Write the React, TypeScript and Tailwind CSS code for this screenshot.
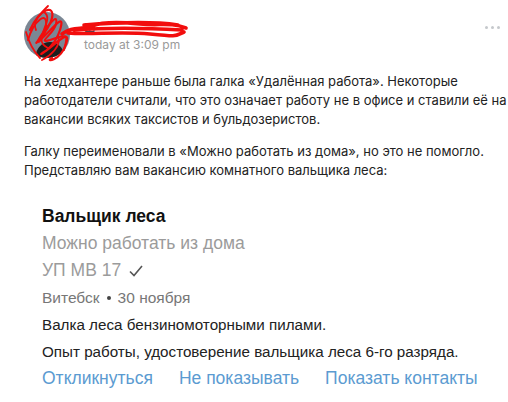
import React from "react";

function Scribble() {
  // red marker scribble over the avatar and the name
  return (
    <svg
      className="absolute left-0 top-0"
      width="200"
      height="64"
      viewBox="0 0 200 64"
      fill="none"
    >
      <path
        d="M30 30 C 40 8, 55 4, 52 18 S 28 50, 40 40 S 66 10, 60 30 S 34 58, 44 52 S 72 26, 66 44 S 44 62, 52 58"
        stroke="#f20d0d"
        strokeWidth="2.2"
        strokeLinecap="round"
      />
      <path
        d="M28 40 C 34 20, 48 10, 46 26 S 32 48, 42 34 S 58 14, 56 24 S 36 44, 50 40 S 70 30, 64 50"
        stroke="#f20d0d"
        strokeWidth="2"
        strokeLinecap="round"
      />
      <path
        d="M48 6 C 40 14, 32 22, 36 30 M 44 12 C 56 20, 30 40, 48 48 M 58 36 C 62 46, 50 56, 42 60 M 26 32 C 30 46, 36 54, 40 58"
        stroke="#f20d0d"
        strokeWidth="1.8"
        strokeLinecap="round"
      />
      <path
        d="M62 34 C 72 26, 82 30, 92 26 S 120 22, 140 24 S 170 22, 186 28 M 68 33 C 90 35, 120 31, 150 34 S 175 36, 184 32 M 74 30 C 100 28, 130 27, 182 30 M 84 25 C 110 23, 150 21, 178 25"
        stroke="#f20d0d"
        strokeWidth="3.6"
        strokeLinecap="round"
      />
    </svg>
  );
}

export default function App() {
  return (
    <div
      className="relative w-[508px] h-[402px] overflow-hidden bg-white text-[#222]"
      style={{ fontFamily: "Inter, 'Liberation Sans', sans-serif" }}
    >
      <div className="relative flex items-start pl-[24px] pt-[12px] h-[64px]">
        <div className="relative w-[46px] h-[46px] rounded-full bg-[#7b8794] overflow-hidden">
          <div className="absolute bottom-0 left-[12px] w-[28px] h-[16px] rounded-t-full bg-[#1e1e1e]" />
        </div>
        <div className="ml-[14px] pt-[9px]">
          <div className="h-[14px] text-[12px] leading-[14px] text-[#3b4a5a]">Ш</div>
          <div className="mt-[2px] text-[12px] leading-[15px] text-[#9a9a9a]">
            today at 3:09 pm
          </div>
        </div>
        <Scribble />
        <div className="absolute right-[8px] top-[26px] flex gap-[3px]">
          <span className="w-[3px] h-[3px] rounded-full bg-[#c5c8cc]" />
          <span className="w-[3px] h-[3px] rounded-full bg-[#c5c8cc]" />
          <span className="w-[3px] h-[3px] rounded-full bg-[#c5c8cc]" />
        </div>
      </div>

      <div className="px-[24px] pt-[8px] text-[13px] leading-[19px] text-[#222] whitespace-nowrap">
        <p>
          На хедхантере раньше была галка «Удалённая работа». Некоторые
          <br />
          работодатели считали, что это означает работу не в офисе и ставили её на
          <br />
          вакансии всяких таксистов и бульдозеристов.
        </p>
        <p className="mt-[13px]">
          Галку переименовали в «Можно работать из дома», но это не помогло.
          <br />
          Представляю вам вакансию комнатного вальщика леса:
        </p>
      </div>

      <div
        className="pl-[42px] pt-[23px]"
        style={{ fontFamily: "'Liberation Sans', Arial, sans-serif" }}
      >
        <div className="text-[17.5px] leading-[27px] font-bold text-[#111]">Вальщик леса</div>
        <div className="text-[17.5px] leading-[27px] text-[#9b9b9b]">Можно работать из дома</div>
        <div className="flex items-center text-[17.5px] leading-[27px] text-[#9b9b9b]">
          УП МВ 17
          <svg className="ml-[8px]" width="14" height="12" viewBox="0 0 14 12" fill="none">
            <path d="M1 6.5 L5 10.5 L13 1" stroke="#555" strokeWidth="1.6" />
          </svg>
        </div>
        <div className="flex items-center text-[15.5px] leading-[27px] text-[#777]">
          Витебск
          <span className="mx-[7px] w-[4px] h-[4px] rounded-full bg-[#444]" />
          30 ноября
        </div>
        <div className="text-[15.2px] leading-[27px] text-[#222]">
          Валка леса бензиномоторными пилами.
        </div>
        <div className="text-[15.2px] leading-[27px] text-[#222]">
          Опыт работы, удостоверение вальщика леса 6-го разряда.
        </div>
        <div className="flex gap-[26px] text-[17.5px] leading-[27px] text-[#5b9bd1]">
          <span>Откликнуться</span>
          <span>Не показывать</span>
          <span>Показать контакты</span>
        </div>
      </div>
    </div>
  );
}
